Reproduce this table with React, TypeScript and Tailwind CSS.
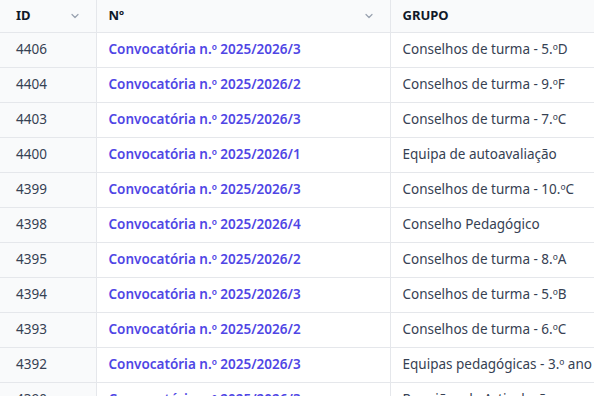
const rows = [
  { id: "4406", num: "Convocatória n.º 2025/2026/3", grupo: "Conselhos de turma - 5.ºD" },
  { id: "4404", num: "Convocatória n.º 2025/2026/2", grupo: "Conselhos de turma - 9.ºF" },
  { id: "4403", num: "Convocatória n.º 2025/2026/3", grupo: "Conselhos de turma - 7.ºC" },
  { id: "4400", num: "Convocatória n.º 2025/2026/1", grupo: "Equipa de autoavaliação" },
  { id: "4399", num: "Convocatória n.º 2025/2026/3", grupo: "Conselhos de turma - 10.ºC" },
  { id: "4398", num: "Convocatória n.º 2025/2026/4", grupo: "Conselho Pedagógico" },
  { id: "4395", num: "Convocatória n.º 2025/2026/2", grupo: "Conselhos de turma - 8.ºA" },
  { id: "4394", num: "Convocatória n.º 2025/2026/3", grupo: "Conselhos de turma - 5.ºB" },
  { id: "4393", num: "Convocatória n.º 2025/2026/2", grupo: "Conselhos de turma - 6.ºC" },
  { id: "4392", num: "Convocatória n.º 2025/2026/3", grupo: "Equipas pedagógicas - 3.º ano" },
  { id: "4390", num: "Convocatória n.º 2025/2026/3", grupo: "Reuniões de Articulação" },
]

function Chevron() {
  return (
    <svg width="10" height="10" viewBox="0 0 10 10" className="text-gray-400">
      <path d="M2 3.5 L5 6.5 L8 3.5" fill="none" stroke="currentColor" strokeWidth="1.2" strokeLinecap="round" strokeLinejoin="round" />
    </svg>
  )
}

export default function App() {
  return (
    <div className="w-[594px] h-[396px] overflow-hidden bg-white" style={{ fontFamily: '"Noto Sans", "Open Sans", sans-serif' }}>
      <table className="border-collapse text-[13.5px] table-fixed w-[700px]">
        <colgroup>
          <col className="w-[96px]" />
          <col className="w-[294px]" />
          <col className="w-[310px]" />
        </colgroup>
        <thead>
          <tr className="h-[32px] bg-[#f9fafb] border-b border-[#e5e7eb]">
            <th className="text-left font-bold text-[13px] text-gray-900 px-4 border-r border-[#e5e7eb]">
              <div className="flex items-center justify-between">
                <span>ID</span>
                <Chevron />
              </div>
            </th>
            <th className="text-left font-bold text-[13px] text-gray-900 pl-3 pr-4 border-r border-[#e5e7eb]">
              <div className="flex items-center justify-between">
                <span>Nº</span>
                <Chevron />
              </div>
            </th>
            <th className="text-left font-bold text-[13px] text-gray-900 pl-3">GRUPO</th>
          </tr>
        </thead>
        <tbody>
          {rows.map((r) => (
            <tr key={r.id} className="h-[35px] border-b border-[#e5e7eb]">
              <td className="px-4 bg-[#f9fafb] text-gray-700 border-r border-[#e5e7eb]">{r.id}</td>
              <td className="pl-3 font-semibold text-[#4f46e5] border-r border-[#e5e7eb] whitespace-nowrap">{r.num}</td>
              <td className="pl-3 text-gray-700 whitespace-nowrap">{r.grupo}</td>
            </tr>
          ))}
        </tbody>
      </table>
    </div>
  )
}
